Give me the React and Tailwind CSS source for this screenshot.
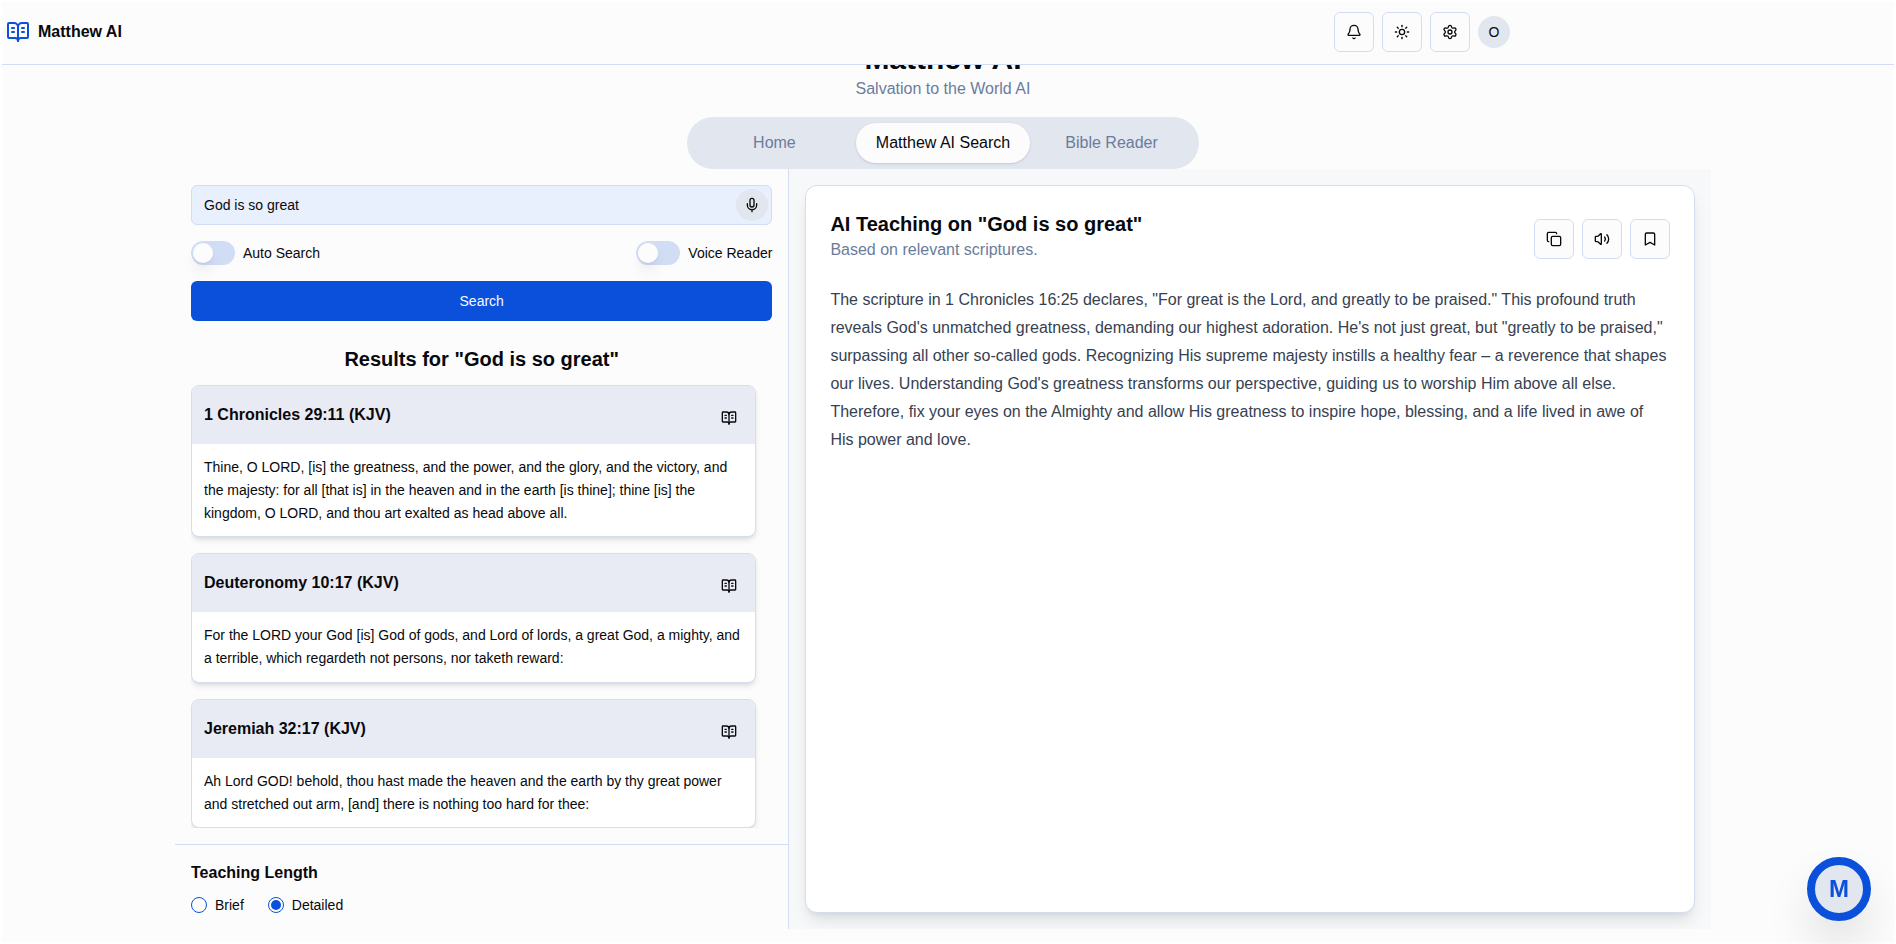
import React, { useState } from 'react';
import {
  Bell,
  BookOpenText,
  Bookmark,
  Copy,
  Mic,
  Settings,
  Sun,
  Volume2,
} from 'lucide-react';

const tabs = ['Home', 'Matthew AI Search', 'Bible Reader'];

const verses = [
  {
    reference: '1 Chronicles 29:11 (KJV)',
    text: 'Thine, O LORD, [is] the greatness, and the power, and the glory, and the victory, and the majesty: for all [that is] in the heaven and in the earth [is thine]; thine [is] the kingdom, O LORD, and thou art exalted as head above all.',
  },
  {
    reference: 'Deuteronomy 10:17 (KJV)',
    text: 'For the LORD your God [is] God of gods, and Lord of lords, a great God, a mighty, and a terrible, which regardeth not persons, nor taketh reward:',
  },
  {
    reference: 'Jeremiah 32:17 (KJV)',
    text: 'Ah Lord GOD! behold, thou hast made the heaven and the earth by thy great power and stretched out arm, [and] there is nothing too hard for thee:',
  },
];

const teaching =
  'The scripture in 1 Chronicles 16:25 declares, "For great is the Lord, and greatly to be praised." This profound truth reveals God\'s unmatched greatness, demanding our highest adoration. He\'s not just great, but "greatly to be praised," surpassing all other so-called gods. Recognizing His supreme majesty instills a healthy fear – a reverence that shapes our lives. Understanding God\'s greatness transforms our perspective, guiding us to worship Him above all else. Therefore, fix your eyes on the Almighty and allow His greatness to inspire hope, blessing, and a life lived in awe of His power and love.';

const IconButton = ({ icon: Icon, label }) => (
  <button
    type="button"
    aria-label={label}
    className="flex size-10 items-center justify-center rounded-md border border-[#d1ddf5] bg-[#fcfcfd]"
  >
    <Icon className="size-4" />
  </button>
);

const Toggle = ({ id, label }) => {
  const [on, setOn] = useState(false);

  return (
    <div className="flex items-center gap-2">
      <input
        id={id}
        type="checkbox"
        role="switch"
        checked={on}
        onChange={(e) => setOn(e.target.checked)}
        className="flex h-6 w-11 cursor-pointer appearance-none items-center rounded-full bg-[#d1dcf5] px-0.5 before:size-5 before:rounded-full before:bg-[#fcfcfd] before:shadow-lg before:transition-transform checked:bg-[#0b50da] checked:before:translate-x-5"
      />
      <label htmlFor={id} className="text-sm">{label}</label>
    </div>
  );
};

const LengthOption = ({ value, label, selected, onSelect }) => (
  <div className="flex items-center gap-2">
    <input
      id={value}
      type="radio"
      name="teaching-length"
      value={value}
      checked={selected}
      onChange={() => onSelect(value)}
      className="grid size-4 appearance-none place-content-center rounded-full border border-[#0b50da] before:size-2.5 before:rounded-full checked:before:bg-[#0b50da]"
    />
    <label htmlFor={value} className="text-sm leading-4">{label}</label>
  </div>
);

const VerseCard = ({ reference, text }) => (
  <article className="overflow-hidden rounded-lg border border-[#d5ddee] bg-white shadow-md">
    <div className="flex h-[58px] items-end justify-between bg-[#e8ebf3] p-3">
      <h3 className="self-center text-base font-semibold">{reference}</h3>
      <button
        type="button"
        aria-label={`Read ${reference}`}
        className="flex size-7 items-center justify-center"
      >
        <BookOpenText className="size-4" />
      </button>
    </div>
    <p className="p-3 text-sm leading-relaxed">{text}</p>
  </article>
);

const Header = () => (
  <header className="sticky top-0 z-10 border-b border-[#d1dcf5] bg-[#fcfcfd]">
    <div className="flex h-[62px] max-w-[1508px] items-center justify-between pb-0.5 pl-1">
      <a href="#" className="flex items-center gap-2 font-bold">
        <BookOpenText className="size-6 text-[#0b50da]" />
        Matthew AI
      </a>
      <div className="flex items-center gap-2">
        <IconButton icon={Bell} label="Notifications" />
        <IconButton icon={Sun} label="Toggle theme" />
        <IconButton icon={Settings} label="Settings" />
        <button
          type="button"
          aria-label="Account"
          className="flex size-8 items-center justify-center rounded-full bg-[#e1e6ef] text-sm"
        >
          O
        </button>
      </div>
    </div>
  </header>
);

const App = () => {
  const [activeTab, setActiveTab] = useState('Matthew AI Search');
  const [query, setQuery] = useState('God is so great');
  const [length, setLength] = useState('detailed');

  return (
    <div className="min-h-screen border-2 border-white bg-[#fcfcfd] font-['Liberation_Sans',Arial,sans-serif] text-[#08090c]">
      <Header />

      {/* scrolled a little, so the title sits partly under the header */}
      <main className="-mt-6 pr-2.5">
        <div className="text-center">
          <h1 className="text-3xl font-bold">Matthew AI</h1>
          <p className="text-[#6b7c9b]">Salvation to the World AI</p>
        </div>

        <nav className="mx-auto mt-4 flex max-w-lg rounded-full bg-[#e1e6ef] p-1.5">
          {tabs.map((tab) => (
            <button
              key={tab}
              type="button"
              onClick={() => setActiveTab(tab)}
              className={
                tab === activeTab
                  ? 'h-10 flex-1 whitespace-nowrap rounded-full bg-[#fcfcfd] px-5 shadow-sm'
                  : 'h-10 flex-1 whitespace-nowrap rounded-full px-5 text-[#6b7c9b]'
              }
            >
              {tab}
            </button>
          ))}
        </nav>

        <div className="mx-auto flex max-w-[1536px]">
          <aside className="w-2/5 border-r border-[#d1dcf5]">
            <div className="px-4 pt-4">
              <div className="relative">
                <input
                  type="text"
                  aria-label="Search scripture"
                  value={query}
                  onChange={(e) => setQuery(e.target.value)}
                  className="h-10 w-full rounded-md border border-[#d1dcf5] bg-[#e8f0fe] px-3 text-sm"
                />
                <button
                  type="button"
                  aria-label="Voice input"
                  className="absolute top-1 right-1 flex size-8 items-center justify-center rounded-full bg-[#e1e6ef]"
                >
                  <Mic className="size-4" />
                </button>
              </div>

              <div className="mt-4 flex h-6 items-center justify-between">
                <Toggle id="auto-search" label="Auto Search" />
                <Toggle id="voice-reader" label="Voice Reader" />
              </div>

              <button
                type="button"
                className="mt-4 h-10 w-full rounded-md bg-[#0b50da] text-sm text-[#f8fafc]"
              >
                Search
              </button>

              <h2 className="mt-6 mb-3 text-center text-xl font-semibold">
                Results for "God is so great"
              </h2>

              <div className="mb-4 flex flex-col gap-4 overflow-hidden pr-4">
                {verses.map((verse) => (
                  <VerseCard key={verse.reference} {...verse} />
                ))}
              </div>
            </div>

            <div
              role="radiogroup"
              aria-labelledby="teaching-length"
              className="border-t border-[#d1dcf5] p-4"
            >
              <h3 id="teaching-length" className="mb-3 font-semibold">Teaching Length</h3>
              <div className="flex gap-6">
                <LengthOption
                  value="brief"
                  label="Brief"
                  selected={length === 'brief'}
                  onSelect={setLength}
                />
                <LengthOption
                  value="detailed"
                  label="Detailed"
                  selected={length === 'detailed'}
                  onSelect={setLength}
                />
              </div>
            </div>
          </aside>

          <section className="flex flex-1 overflow-hidden bg-[#f6f8fa] p-4">
            <div className="flex-1 rounded-xl border border-[#d5ddee] bg-white p-6 shadow-lg">
              <div className="flex items-center justify-between">
                <div>
                  <h2 className="text-xl font-semibold">AI Teaching on "God is so great"</h2>
                  <p className="text-[#6b7c9b]">Based on relevant scriptures.</p>
                </div>
                <div className="flex gap-2 pt-1.5">
                  <IconButton icon={Copy} label="Copy" />
                  <IconButton icon={Volume2} label="Read aloud" />
                  <IconButton icon={Bookmark} label="Bookmark" />
                </div>
              </div>
              <p className="mt-6 leading-7 text-[#374151]">{teaching}</p>
            </div>
          </section>
        </div>
      </main>

      <button
        type="button"
        aria-label="Open Matthew AI chat"
        className="fixed right-[25px] bottom-[23px] flex size-16 items-center justify-center rounded-full border-8 border-[#0b50da] bg-[#e1e6ef] text-2xl font-bold text-[#0b50da] shadow-2xl"
      >
        M
      </button>
    </div>
  );
};

export default App;
